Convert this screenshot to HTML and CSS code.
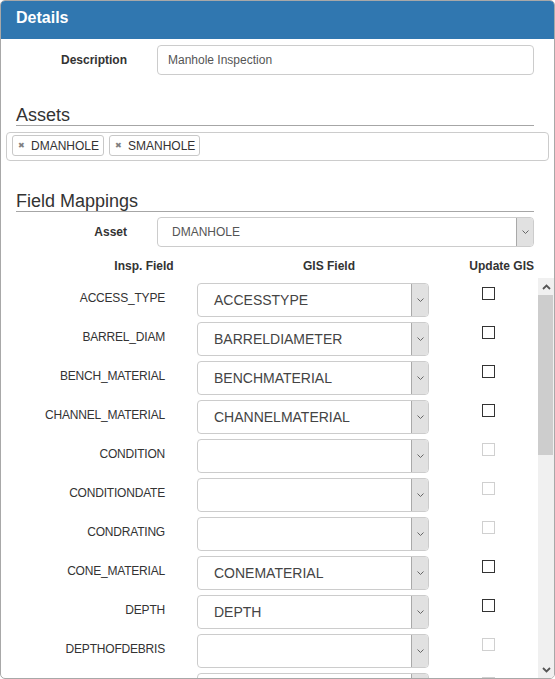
FILE: index.html
```html
<!DOCTYPE html>
<html lang="en">
<head>
    <meta charset="UTF-8">
    <title>Details</title>
    <link rel="stylesheet" href="styles.css">
</head>
<body>
    <div class="panel">
        <div class="panel-heading">Details</div>
        <div class="panel-body">
            <div class="form-row">
                <label class="form-label">Description</label>
                <div class="text-input">Manhole Inspection</div>
            </div>

            <div class="section-title">Assets</div>
            <div class="tag-box">
                <span class="tag"><span class="tag-x">&#10006;</span>DMANHOLE</span>
                <span class="tag"><span class="tag-x">&#10006;</span>SMANHOLE</span>
            </div>

            <div class="section-title">Field Mappings</div>
            <div class="form-row asset-row">
                <label class="form-label">Asset</label>
                <div class="dropdown wide">
                    <span class="dropdown-text">DMANHOLE</span>
                    <span class="dropdown-btn">
                        <svg width="7" height="4" viewBox="0 0 7 4"><polyline points="0.5,0.5 3.5,3.5 6.5,0.5" fill="none" stroke="#666" stroke-width="1"/></svg>
                    </span>
                </div>
            </div>

            <div class="col-headers">
                <div class="col-insp">Insp. Field</div>
                <div class="col-gis">GIS Field</div>
                <div class="col-update">Update GIS</div>
            </div>
        </div>

        <div class="mapping-scroll">
            <div class="mapping-list" id="mapping-list"></div>
            <div class="scrollbar">
                <div class="scroll-btn">
                    <svg width="9" height="6" viewBox="0 0 9 6"><polyline points="1,5 4.5,1.5 8,5" fill="none" stroke="#555" stroke-width="1.8"/></svg>
                </div>
                <div class="scroll-track"><div class="scroll-thumb"></div></div>
                <div class="scroll-btn">
                    <svg width="9" height="6" viewBox="0 0 9 6"><polyline points="1,1 4.5,4.5 8,1" fill="none" stroke="#555" stroke-width="1.8"/></svg>
                </div>
            </div>
        </div>
    </div>

    <script>
        const mappings = [
            ["ACCESS_TYPE", "ACCESSTYPE"],
            ["BARREL_DIAM", "BARRELDIAMETER"],
            ["BENCH_MATERIAL", "BENCHMATERIAL"],
            ["CHANNEL_MATERIAL", "CHANNELMATERIAL"],
            ["CONDITION", ""],
            ["CONDITIONDATE", ""],
            ["CONDRATING", ""],
            ["CONE_MATERIAL", "CONEMATERIAL"],
            ["DEPTH", "DEPTH"],
            ["DEPTHOFDEBRIS", ""],
            ["", ""]
        ];

        const list = document.getElementById("mapping-list");
        mappings.forEach(([insp, gis]) => {
            const row = document.createElement("div");
            row.className = "map-row";
            row.innerHTML = `
                <div class="map-label">${insp}</div>
                <div class="dropdown">
                    <span class="dropdown-text">${gis}</span>
                    <span class="dropdown-btn">
                        <svg width="7" height="4" viewBox="0 0 7 4"><polyline points="0.5,0.5 3.5,3.5 6.5,0.5" fill="none" stroke="#666" stroke-width="1"/></svg>
                    </span>
                </div>
                <div class="map-check"><span class="checkbox ${gis ? "" : "disabled"}"></span></div>`;
            list.appendChild(row);
        });
    </script>
</body>
</html>
```

FILE: styles.css
```css
body {
    margin: 0;
    font-family: "Liberation Sans", Arial, sans-serif;
    color: #333;
    background: #fff;
}
.panel {
    width: 555px;
    height: 679px;
    box-sizing: border-box;
    border: 1px solid #a8a8a8;
    border-radius: 5px;
    overflow: hidden;
    display: flex;
    flex-direction: column;
}
.panel-heading {
    height: 38px;
    flex-shrink: 0;
    background: #3077b0;
    color: #fff;
    font-size: 16px;
    font-weight: bold;
    line-height: 34px;
    padding-left: 15px;
}
.panel-body {
    padding: 0 5px;
    flex-shrink: 0;
}
.form-row {
    display: flex;
    align-items: center;
    margin-top: 6px;
}
.asset-row {
    margin-top: 5px;
}
.form-label {
    width: 121px;
    text-align: right;
    font-size: 12px;
    font-weight: bold;
    margin-right: 30px;
}
.text-input {
    width: 377px;
    height: 30px;
    box-sizing: border-box;
    border: 1px solid #ccc;
    border-radius: 4px;
    padding-left: 10px;
    font-size: 12px;
    line-height: 28px;
    color: #555;
}
.section-title {
    margin: 30px 15px 0 10px;
    font-size: 18px;
    line-height: 20px;
    border-bottom: 1px solid #a6a6a6;
}
.tag-box {
    margin-top: 6px;
    height: 29px;
    box-sizing: border-box;
    border: 1px solid #ccc;
    border-radius: 4px;
    padding: 2px 5px;
    display: flex;
    gap: 5px;
}
.tag {
    height: 21px;
    box-sizing: border-box;
    display: inline-flex;
    align-items: center;
    gap: 5px;
    padding: 0 4px 0 5px;
    border: 1px solid #c8c8c8;
    border-radius: 3px;
    font-size: 12px;
    color: #333;
}
.tag-x {
    color: #808080;
    font-family: "DejaVu Sans", sans-serif;
    font-size: 8px;
    width: 8px;
}
.dropdown {
    width: 232px;
    height: 34px;
    box-sizing: border-box;
    border: 1px solid #ccc;
    border-radius: 4px;
    overflow: hidden;
    display: flex;
    background: #fff;
}
.dropdown.wide {
    width: 377px;
    height: 30px;
}
.dropdown-text {
    flex: 1;
    padding-left: 16px;
    font-size: 14px;
    line-height: 32px;
    color: #444;
}
.dropdown.wide .dropdown-text {
    padding-left: 14px;
    font-size: 12px;
    line-height: 28px;
    color: #555;
}
.dropdown-btn {
    width: 16px;
    background: #e1e1e1;
    border-left: 1px solid #a9a9a9;
    display: flex;
    align-items: center;
    justify-content: center;
}
.col-headers {
    display: flex;
    height: 31px;
    box-sizing: border-box;
    padding-top: 12px;
    font-size: 12px;
    font-weight: bold;
    line-height: 15px;
}
.col-insp {
    width: 266px;
    padding-left: 10px;
    box-sizing: border-box;
    text-align: center;
}
.col-gis {
    width: 114px;
    text-align: center;
}
.col-update {
    width: 148px;
    text-align: right;
}
.mapping-scroll {
    flex: 1;
    display: flex;
    min-height: 0;
}
.mapping-list {
    flex: 1;
    overflow: hidden;
}
.map-row {
    display: flex;
    align-items: flex-start;
    padding-top: 5px;
}
.map-label {
    width: 164px;
    text-align: right;
    font-size: 12px;
    line-height: 20px;
    padding-top: 5px;
    margin-right: 32px;
    flex-shrink: 0;
    letter-spacing: -0.2px;
}
.map-row .dropdown {
    flex-shrink: 0;
}
.map-check {
    margin-left: 53px;
    padding-top: 4px;
}
.checkbox {
    display: block;
    width: 13px;
    height: 13px;
    box-sizing: border-box;
    border: 1px solid #333;
    background: #fff;
}
.checkbox.disabled {
    border-color: #d0d0d0;
}
.scrollbar {
    width: 16px;
    background: #f0f0f0;
    display: flex;
    flex-direction: column;
}
.scroll-btn {
    height: 17px;
    display: flex;
    align-items: center;
    justify-content: center;
}
.scroll-track {
    flex: 1;
    padding-right: 1px;
}
.scroll-thumb {
    height: 160px;
    background: #cdcdcd;
}
```
